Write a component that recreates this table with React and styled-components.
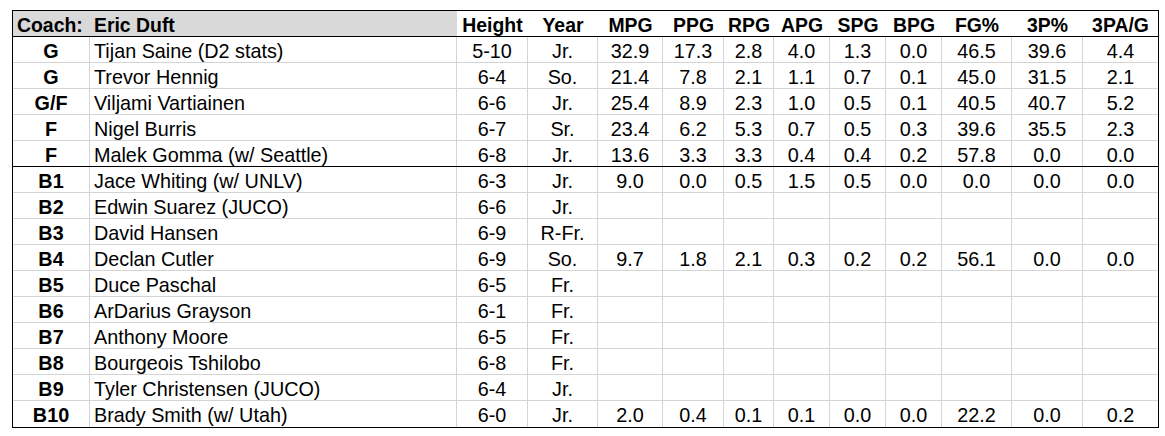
import React from "react";
import styled, { createGlobalStyle } from "styled-components";

const GlobalStyle = createGlobalStyle`
  body {
    margin: 0;
    background: #fff;
    font-family: "Liberation Sans", Arial, sans-serif;
    color: #000;
  }
`;

const COLS = "77px 367px 71px 70px 65px 61px 50px 56px 56px 56px 70px 71px 75px";

const Page = styled.div`
  padding: 10px 0 0 12px;
`;

const Sheet = styled.div`
  width: 1145px;
  border: 1px solid #000;
`;

const Row = styled.div`
  display: grid;
  grid-template-columns: ${COLS};
  height: 26px;
  box-sizing: border-box;
  border-bottom: 1px solid ${(p) => (p.$divider ? "#000" : "#d4d4d4")};
  &:last-child {
    border-bottom: none;
  }
`;

const HeaderRow = styled(Row)`
  border-bottom: 1px solid #000;
`;

const Cell = styled.div`
  box-sizing: border-box;
  font-size: 19.8px;
  line-height: 26px;
  padding-top: 1px;
  white-space: nowrap;
  overflow: hidden;
  text-align: ${(p) => p.$align || "center"};
  padding-left: ${(p) => (p.$align === "left" ? "4px" : "0")};
  font-weight: ${(p) => (p.$bold ? 700 : 400)};
  border-right: 1px solid #d4d4d4;
  &:last-child {
    border-right: none;
  }
`;

const HeadCell = styled(Cell)`
  font-weight: 700;
  font-size: 19.4px;
  border-right: none;
  background: ${(p) => (p.$shade ? "#d9d9d9" : "#fff")};
`;

const heads = ["Height", "Year", "MPG", "PPG", "RPG", "APG", "SPG", "BPG", "FG%", "3P%", "3PA/G"];

const players = [
  ["G", "Tijan Saine (D2 stats)", "5-10", "Jr.", "32.9 17.3 2.8 4.0 1.3 0.0 46.5 39.6 4.4"],
  ["G", "Trevor Hennig", "6-4", "So.", "21.4 7.8 2.1 1.1 0.7 0.1 45.0 31.5 2.1"],
  ["G/F", "Viljami Vartiainen", "6-6", "Jr.", "25.4 8.9 2.3 1.0 0.5 0.1 40.5 40.7 5.2"],
  ["F", "Nigel Burris", "6-7", "Sr.", "23.4 6.2 5.3 0.7 0.5 0.3 39.6 35.5 2.3"],
  ["F", "Malek Gomma (w/ Seattle)", "6-8", "Jr.", "13.6 3.3 3.3 0.4 0.4 0.2 57.8 0.0 0.0"],
  ["B1", "Jace Whiting (w/ UNLV)", "6-3", "Jr.", "9.0 0.0 0.5 1.5 0.5 0.0 0.0 0.0 0.0"],
  ["B2", "Edwin Suarez (JUCO)", "6-6", "Jr.", ""],
  ["B3", "David Hansen", "6-9", "R-Fr.", ""],
  ["B4", "Declan Cutler", "6-9", "So.", "9.7 1.8 2.1 0.3 0.2 0.2 56.1 0.0 0.0"],
  ["B5", "Duce Paschal", "6-5", "Fr.", ""],
  ["B6", "ArDarius Grayson", "6-1", "Fr.", ""],
  ["B7", "Anthony Moore", "6-5", "Fr.", ""],
  ["B8", "Bourgeois Tshilobo", "6-8", "Fr.", ""],
  ["B9", "Tyler Christensen (JUCO)", "6-4", "Jr.", ""],
  ["B10", "Brady Smith (w/ Utah)", "6-0", "Jr.", "2.0 0.4 0.1 0.1 0.0 0.0 22.2 0.0 0.2"],
];

export default function App() {
  return (
    <Page>
      <GlobalStyle />
      <Sheet>
        <HeaderRow>
          <HeadCell $shade $align="left">Coach:</HeadCell>
          <HeadCell $shade $align="left">Eric Duft</HeadCell>
          {heads.map((h) => (
            <HeadCell key={h}>{h}</HeadCell>
          ))}
        </HeaderRow>
        {players.map(([pos, name, ht, yr, stats], i) => {
          const nums = stats ? stats.split(" ") : Array(9).fill("");
          return (
            <Row key={pos} $divider={i === 4}>
              <Cell $bold>{pos}</Cell>
              <Cell $align="left">{name}</Cell>
              <Cell>{ht}</Cell>
              <Cell>{yr}</Cell>
              {nums.map((n, j) => (
                <Cell key={j}>{n}</Cell>
              ))}
            </Row>
          );
        })}
      </Sheet>
    </Page>
  );
}
